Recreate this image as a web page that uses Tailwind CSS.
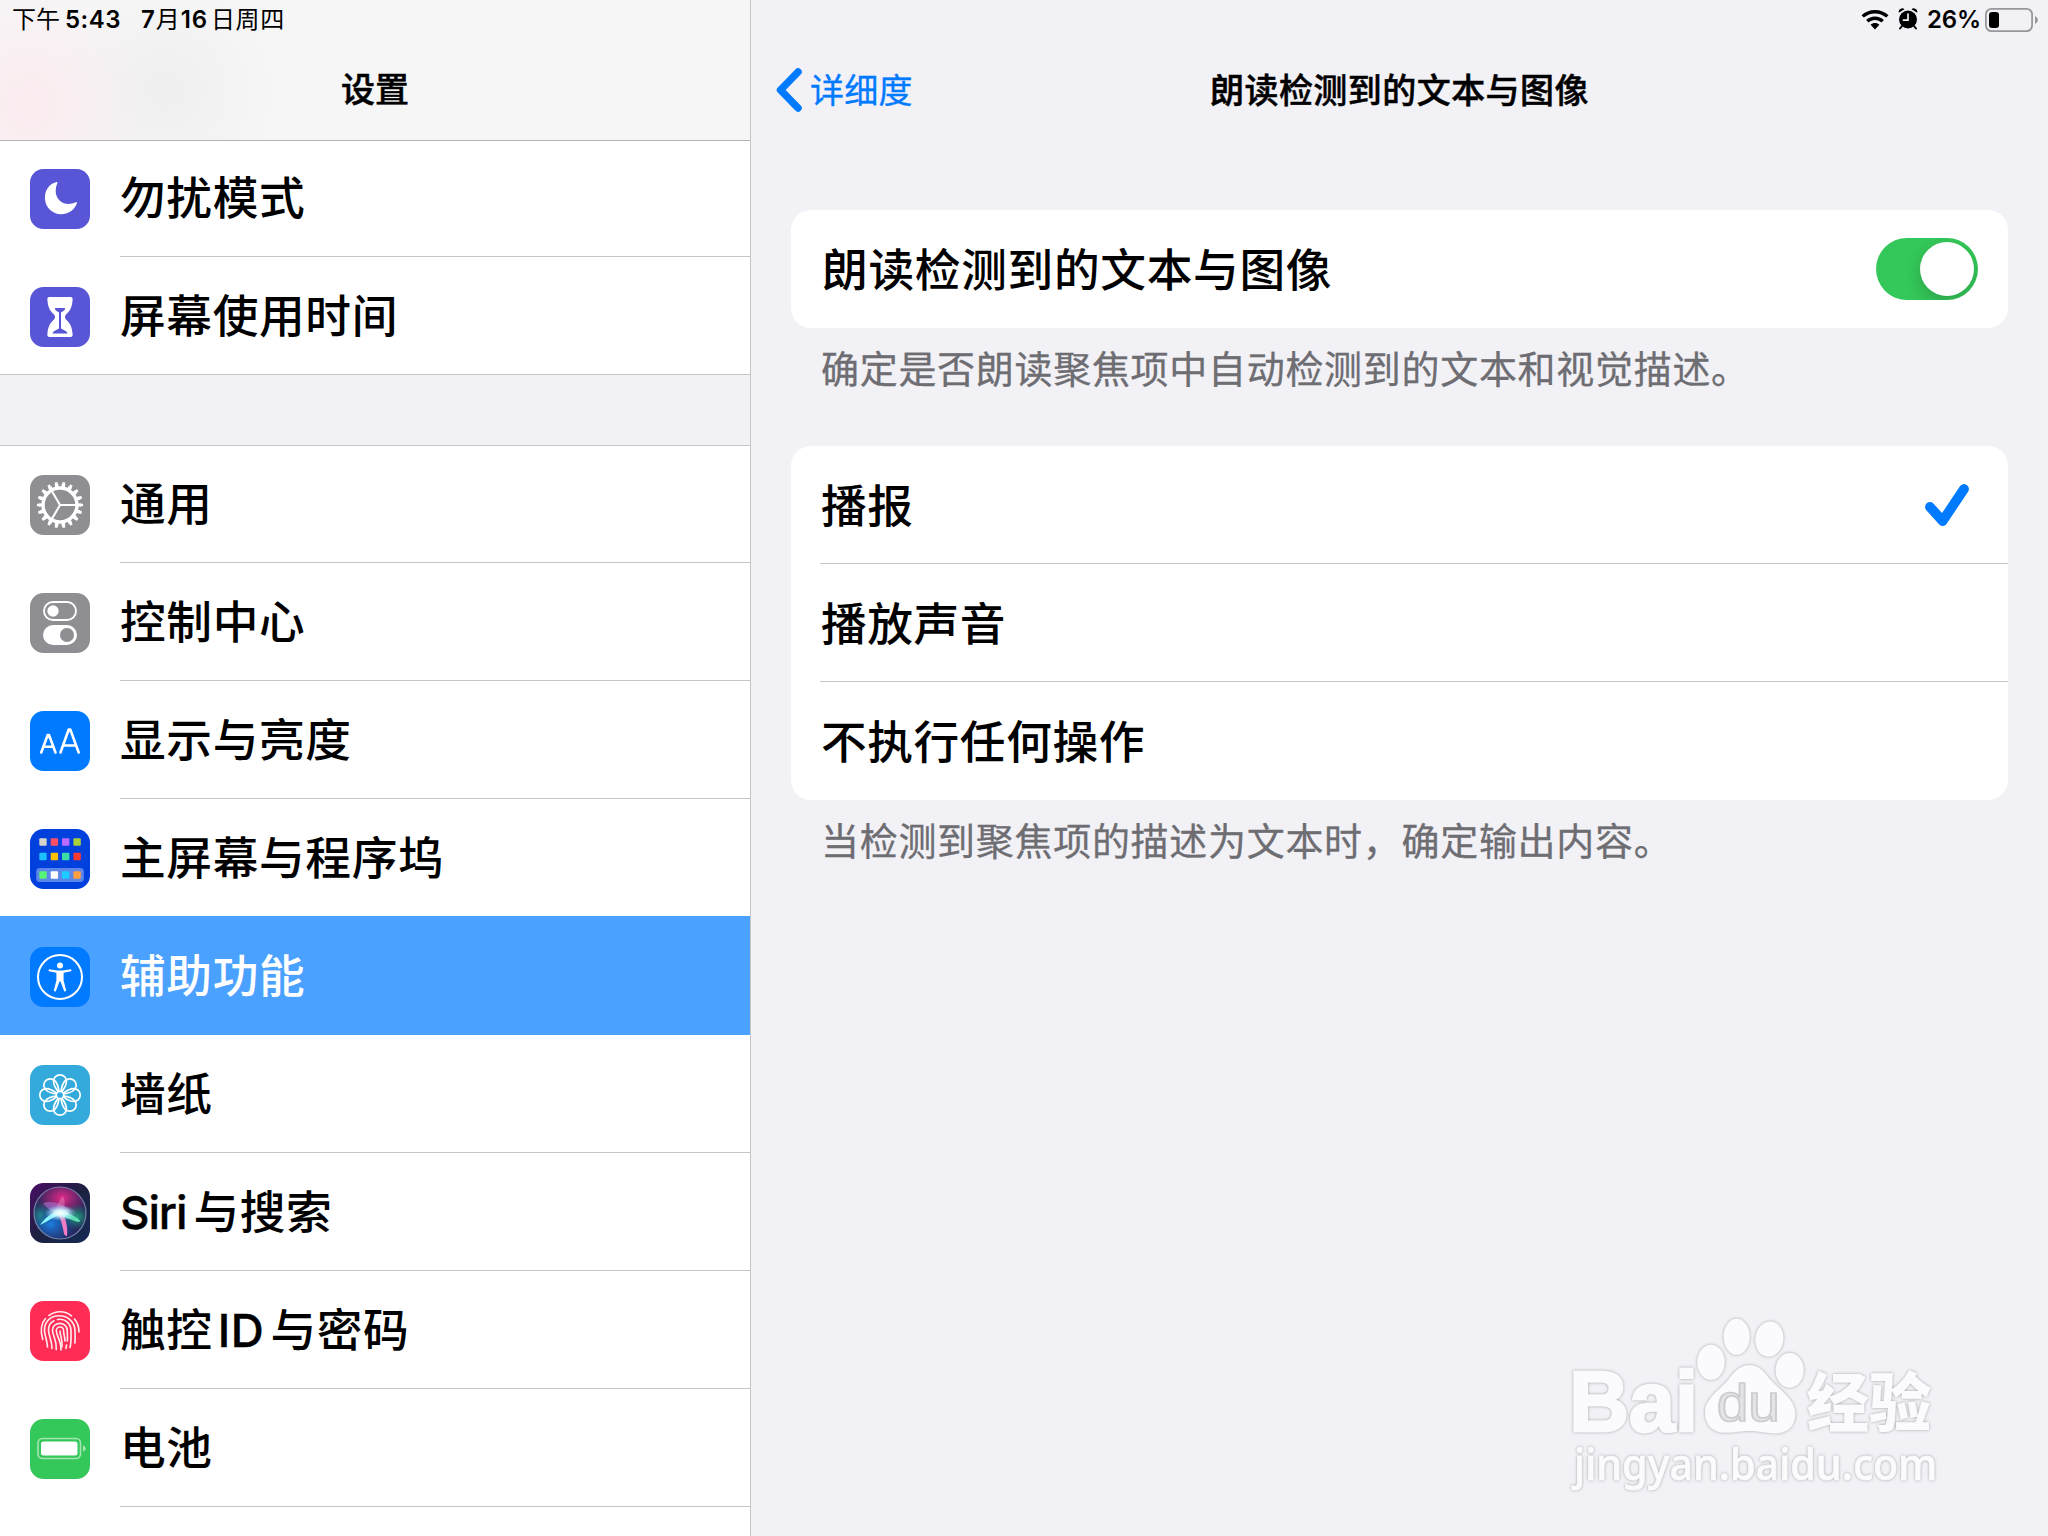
<!DOCTYPE html>
<html lang="zh-CN">
<head>
<meta charset="utf-8">
<title>设置</title>
<script src="https://cdn.jsdelivr.net/npm/@tailwindcss/browser@4"></script>
</head>
<body class="w-[2048px] h-[1536px] overflow-hidden flex bg-[#f2f1f6] text-black font-['Inter','Noto_Sans_CJK_SC',sans-serif]">

<aside class="w-[751px] h-[1536px] shrink-0 flex flex-col bg-white border-r border-[#c6c6c8] overflow-hidden">
  <header class="h-[141px] shrink-0 flex flex-col border-b border-[#b2b2b4] bg-[#f6f6f6] bg-[radial-gradient(ellipse_120px_130px_at_30px_105px,#fbebef_0%,#fbebef00_100%),radial-gradient(ellipse_110px_110px_at_165px_90px,#efefef_0%,#efefef00_100%)]">
    <div class="h-10 flex items-center pl-3 text-[24px] leading-10 whitespace-nowrap">
      <span>下午</span><span class="ml-[5px] font-semibold tracking-[0.5px]">5:43</span>
      <span class="ml-[20px] font-semibold">7</span><span class="ml-px">月</span><span class="ml-px font-semibold tracking-[0.8px]">16</span><span class="ml-[3px] tracking-[0.6px]">日周四</span>
    </div>
    <h1 class="h-[100px] flex justify-center pt-[25px] text-[34px] leading-[50px] font-medium [-webkit-text-stroke:0.5px]">设置</h1>
  </header>

  <nav class="flex flex-col text-[45.7px] leading-[60px] font-medium tracking-[0.65px] whitespace-nowrap">
    <a class="h-[116px] flex pl-[30px] gap-[30px]">
      <svg class="w-[60px] h-[60px] mt-7 shrink-0" viewBox="0 0 60 60"><rect width="60" height="60" rx="13.500" fill="#5856d6"/><path d="M26.600 13C18.600 15 14.600 22 14.900 29.500C15.300 38.500 22.500 45.200 31 45.200C38.500 45.200 44.500 41 46.900 34.300C47.200 33.400 46.600 33 45.800 33.300C43 34.500 41 34.900 38.500 34.900C31 34.900 25.700 29.300 25.700 22C25.700 19.500 26.200 17 27.300 14.200C27.600 13.300 27.300 12.900 26.600 13Z" fill="#fff"/></svg>
      <div class="grow border-b border-[#c6c6c8] pt-7">勿扰模式</div>
    </a>
    <a class="h-[118px] flex pl-[30px] gap-[30px] border-b border-[#c6c6c8]">
      <svg class="w-[60px] h-[60px] mt-[30px] shrink-0" viewBox="0 0 60 60"><rect width="60" height="60" rx="13.500" fill="#5856d6"/><path d="M19.500 10H40.500Q43 10 42.600 13C42 20 40.500 23.500 36 27.500Q34 30 36 32.500C40.500 36.500 42 40 42.600 47Q43 50 40.500 50H19.500Q17 50 17.400 47C18 40 19.500 36.500 24 32.500Q26 30 24 27.500C19.500 23.500 18 20 17.400 13Q17 10 19.500 10Z" fill="#fff"/><path d="M24.800 21H35.200L34.500 23.300L31 25.500V41.500L36.500 44.500L37.500 46.500H22.500L23.500 44.500L29 41.500V25.500L25.500 23.300Z" fill="#5856d6"/></svg>
      <div class="grow pt-[30px]">屏幕使用时间</div>
    </a>
    <div class="h-[70px] bg-[#f2f1f6]"></div>
    <a class="h-[118px] flex pl-[30px] gap-[30px] border-t border-[#c6c6c8]">
      <svg class="w-[60px] h-[60px] mt-[29px] shrink-0" viewBox="0 0 60 60" fill="none" stroke="#fff"><rect width="60" height="60" rx="13.500" fill="#8e8e93" stroke="none"/><circle cx="30" cy="30" r="17" stroke-width="3.400"/><circle cx="30" cy="30" r="19.500" stroke-width="3.400" pathLength="360" stroke-dasharray="10.500 9.500" stroke-dashoffset="5.250"/><circle cx="30" cy="30" r="21.700" stroke-width="2.800" pathLength="360" stroke-dasharray="7 13" stroke-dashoffset="3.500"/><path d="M46 30H30L22 16.200M30 30L22 43.800" stroke-width="2.100"/></svg>
      <div class="grow border-b border-[#c6c6c8] pt-[29px]">通用</div>
    </a>
    <a class="h-[118px] flex pl-[30px] gap-[30px]">
      <svg class="w-[60px] h-[60px] mt-[30px] shrink-0" viewBox="0 0 60 60"><rect width="60" height="60" rx="13.500" fill="#8e8e93"/><rect x="14" y="9" width="32" height="18" rx="9" fill="none" stroke="#fff" stroke-width="1.900"/><circle cx="23" cy="18" r="5.700" fill="#fff"/><rect x="13" y="32" width="34" height="20" rx="10" fill="#fff"/><circle cx="37" cy="42" r="7" fill="#8e8e93"/></svg>
      <div class="grow border-b border-[#c6c6c8] pt-[30px]">控制中心</div>
    </a>
    <a class="h-[118px] flex pl-[30px] gap-[30px]">
      <svg class="w-[60px] h-[60px] mt-[30px] shrink-0" viewBox="0 0 60 60" fill="none" stroke="#fff" stroke-width="2.600" stroke-linecap="round" stroke-linejoin="round"><rect width="60" height="60" rx="13.500" fill="#007aff" stroke="none"/><path d="M11.200 41.500L17.700 24H19L25.500 41.500M13.700 35.800H23M30.500 41.500L38.700 18.500H40.300L48.700 41.500M33.200 34.500H46"/></svg>
      <div class="grow border-b border-[#c6c6c8] pt-[30px]">显示与亮度</div>
    </a>
    <a class="h-[117px] flex pl-[30px] gap-[30px]">
      <svg class="w-[60px] h-[60px] mt-[30px] shrink-0" viewBox="0 0 60 60"><rect width="60" height="60" rx="13.500" fill="#0040dd"/><rect x="6.200" y="39" width="47.600" height="14" rx="3.500" fill="#5c86ea"/><g><rect x="9.300" y="9.300" width="7.400" height="7.400" rx="1" fill="#d6d3cb"/><rect x="20.700" y="9.300" width="7.400" height="7.400" rx="1" fill="#ff4f64"/><rect x="32" y="9.300" width="7.400" height="7.400" rx="1" fill="#bb6bff"/><rect x="43.400" y="9.300" width="7.400" height="7.400" rx="1" fill="#acd039"/><rect x="9.300" y="23.800" width="7.400" height="7.400" rx="1" fill="#19bfff"/><rect x="20.700" y="23.800" width="7.400" height="7.400" rx="1" fill="#ffc100"/><rect x="32" y="23.800" width="7.400" height="7.400" rx="1" fill="#3bdca5"/><rect x="43.400" y="23.800" width="7.400" height="7.400" rx="1" fill="#ff3a30"/><rect x="9.300" y="42.300" width="7.400" height="7.400" rx="1" fill="#56f577"/><rect x="20.700" y="42.300" width="7.400" height="7.400" rx="1" fill="#fff"/><rect x="32" y="42.300" width="7.400" height="7.400" rx="1" fill="#1accff"/><rect x="43.400" y="42.300" width="7.400" height="7.400" rx="1" fill="#ff9f40"/></g></svg>
      <div class="grow pt-[30px]">主屏幕与程序坞</div>
    </a>
    <a class="h-[119px] flex pl-[30px] gap-[30px] bg-[#4ba1ff] text-white">
      <svg class="w-[60px] h-[60px] mt-[31px] shrink-0" viewBox="0 0 60 60"><rect width="60" height="60" rx="13.500" fill="#007aff"/><circle cx="30" cy="30" r="22" fill="none" stroke="#fff" stroke-width="2"/><circle cx="30" cy="18.500" r="3" fill="#fff"/><path d="M19 22.200L27.500 23.600H32.500L41 22.200Q42 23.600 41 24.200L33.600 25.800V33.500L36.200 43.600Q35.200 45.200 34.200 44.200L30.500 34.500H29.500L25.800 44.200Q24.800 45.200 23.800 43.600L26.400 33.500V25.800L19 24.200Q18 23.600 19 22.200Z" fill="#fff"/></svg>
      <div class="grow pt-[31px]">辅助功能</div>
    </a>
    <a class="h-[118px] flex pl-[30px] gap-[30px]">
      <svg class="w-[60px] h-[60px] mt-[30px] shrink-0" viewBox="0 0 60 60"><rect width="60" height="60" rx="13.500" fill="#34aadc"/>
        <defs><path id="petal" d="M28.200 26.600C26.500 24.500 23.600 20.500 23.600 16.200A6.400 6.400 0 0 1 36.400 16.200C36.400 20.500 33.500 24.500 31.800 26.600"/></defs>
        <g fill="none" stroke="#fff" stroke-width="1.700"><use href="#petal"/><use href="#petal" transform="rotate(45 30 30)"/><use href="#petal" transform="rotate(90 30 30)"/><use href="#petal" transform="rotate(135 30 30)"/><use href="#petal" transform="rotate(180 30 30)"/><use href="#petal" transform="rotate(225 30 30)"/><use href="#petal" transform="rotate(270 30 30)"/><use href="#petal" transform="rotate(315 30 30)"/><circle cx="30" cy="30" r="3.700"/></g></svg>
      <div class="grow border-b border-[#c6c6c8] pt-[30px]">墙纸</div>
    </a>
    <a class="h-[118px] flex pl-[30px] gap-[30px]">
      <svg class="w-[60px] h-[60px] mt-[30px] shrink-0" viewBox="0 0 60 60">
        <defs>
          <linearGradient id="sb" x1="0" y1="0" x2="1" y2="1"><stop offset="0" stop-color="#4a0d66"/><stop offset=".5" stop-color="#1c2140"/><stop offset="1" stop-color="#152a55"/></linearGradient>
          <radialGradient id="s1" cx=".5" cy=".5" r=".5"><stop offset="0" stop-color="#e02a8a"/><stop offset="1" stop-color="#d0207c" stop-opacity="0"/></radialGradient>
          <radialGradient id="s2" cx=".5" cy=".5" r=".5"><stop offset="0" stop-color="#1a7ee0"/><stop offset="1" stop-color="#1560c0" stop-opacity="0"/></radialGradient>
          <radialGradient id="s3" cx=".5" cy=".5" r=".5"><stop offset="0" stop-color="#24c08a"/><stop offset="1" stop-color="#109070" stop-opacity="0"/></radialGradient>
          <radialGradient id="s4" cx=".5" cy=".5" r=".5"><stop offset="0" stop-color="#fff"/><stop offset=".4" stop-color="#d8faff" stop-opacity=".9"/><stop offset="1" stop-color="#7fe0ff" stop-opacity="0"/></radialGradient>
          <clipPath id="sc"><circle cx="30" cy="30" r="26"/></clipPath>
          <filter id="sf" x="-20%" y="-20%" width="140%" height="140%"><feGaussianBlur stdDeviation=".6"/></filter>
        </defs>
        <rect width="60" height="60" rx="13.500" fill="url(#sb)"/>
        <g clip-path="url(#sc)"><circle cx="30" cy="30" r="26" fill="#27265c"/><ellipse cx="32" cy="15" rx="26" ry="20" fill="url(#s1)"/><ellipse cx="21" cy="41" rx="26" ry="22" fill="url(#s2)"/><ellipse cx="10" cy="32" rx="12" ry="14" fill="url(#s3)" opacity=".5"/><ellipse cx="47" cy="34" rx="14" ry="13" fill="url(#s3)" opacity=".8"/>
          <g filter="url(#sf)"><path d="M13 20C22 17 34 21 41 28L30 31C24 30 17 26 13 20Z" fill="#c78bea" opacity=".45"/><path d="M33 13C36 19 35 25 31 30L26 28C27 22 29 17 33 13Z" fill="#f08fc8" opacity=".4"/><path d="M10 42C15 35 22 29 30 28L33 31C25 33 18 38 10 42Z" fill="#8ef6ff"/><path d="M28.500 31L33 30C36 37 38 45 37 53Q35 53 34 51C33 44 31 37 28.500 31Z" fill="#f07cc4"/><path d="M28 27C36 28.500 45 32.500 50 37.500Q50 39 48 39C41 37 34 34 28 31Z" fill="#5fdcb4"/><ellipse cx="30.500" cy="30" rx="16" ry="8" fill="url(#s4)"/></g></g>
        <circle cx="30" cy="30" r="26" fill="none" stroke="#8f9fc4" stroke-opacity=".75" stroke-width="1.200"/></svg>
      <div class="grow border-b border-[#c6c6c8] pt-[30px]"><span class="tracking-[-1.1px] [-webkit-text-stroke:0.4px]">Siri</span><span class="ml-[7px]">与搜索</span></div>
    </a>
    <a class="h-[118px] flex pl-[30px] gap-[30px]">
      <svg class="w-[60px] h-[60px] mt-[30px] shrink-0" viewBox="0 0 60 60"><rect width="60" height="60" rx="13.500" fill="#ff2d55"/><g fill="none" stroke="#fff" stroke-opacity=".9" stroke-width="1.650" stroke-linecap="round"><path d="M19 14.500C25.500 9.500 35 9.500 41.500 14.800M15.500 17.500C11 22.500 10 29 12.700 38.500M44.500 18C47.500 21.500 49 26 49 31"/><path d="M17.500 46C17 38 14.500 34 14.500 29C14.500 20 21 14.800 29 14.800C38 14.800 45 21 45 30C45 35 45.500 38 44.800 42"/><path d="M22 47.500C22 39 18.500 35 18.500 29C18.500 25 20.500 21.500 24 19.800M27.500 18.500C35 17 41 22.500 41 30C41 36 41.500 41 40 46.500"/><path d="M26.300 48.500C27 39 22.500 35 22.500 29C22.500 25 26 22.300 30 22.300C34.500 22.300 37.300 26 37.300 30C37.300 34 37.700 37 37.300 40M36.500 44L36 47.500"/><path d="M31 49C31.500 40 26.300 35 26.300 29.500C26.300 27.500 28 26 30 26C32.500 26 33.600 28 33.600 30C33.600 34 35 36 35 40"/><path d="M30 30C30 35 33 39 32 46"/></g></svg>
      <div class="grow border-b border-[#c6c6c8] pt-[30px]">触控<span class="ml-[5px] mr-1.5 [-webkit-text-stroke:0.4px]">ID</span>与密码</div>
    </a>
    <a class="h-[118px] flex pl-[30px] gap-[30px]">
      <svg class="w-[60px] h-[60px] mt-[30px] shrink-0" viewBox="0 0 60 60"><rect width="60" height="60" rx="13.500" fill="#34c759"/><rect x="8" y="19.500" width="42.500" height="20" rx="4.500" fill="none" stroke="#a3e5b3" stroke-width="1.600"/><rect x="11" y="22.500" width="36.500" height="14" rx="2.500" fill="#fff"/><path d="M53 26.300Q55.800 27.500 55.800 29.500T53 32.700Z" fill="#a3e5b3"/></svg>
      <div class="grow border-b border-[#c6c6c8] pt-[30px]">电池</div>
    </a>
  </nav>
</aside>

<main class="relative w-[1297px] h-[1536px] flex flex-col">
  <div class="h-10 shrink-0 flex items-start justify-end pr-[9px]">
    <svg class="w-7 h-5 mt-2.5" viewBox="0 0 28 20"><path d="M14 0C19.500 0 24 2 27.500 5.200L25.200 7.600C22 4.900 18.300 3.400 14 3.400S6 4.900 2.800 7.600L.5 5.200C4 2 8.500 0 14 0ZM14 6.600C17.500 6.600 20.500 7.900 22.900 10L20.500 12.400C18.700 10.800 16.500 9.900 14 9.900S9.300 10.800 7.500 12.400L5.100 10C7.500 7.900 10.500 6.600 14 6.600ZM14 13.100C15.700 13.100 17.200 13.700 18.400 14.800L14 19.400L9.600 14.800C10.800 13.700 12.300 13.100 14 13.100Z"/></svg>
    <svg class="w-5 h-[22px] mt-2 ml-[9px]" viewBox="0 0 20 22"><circle cx="10" cy="11.500" r="9"/><path d="M.8 4.700Q.3 2 2.300 1Q4.600 -.4 6.500 1.200ZM19.200 4.700Q19.700 2 17.700 1Q15.400 -.4 13.500 1.200Z"/><path d="M4 18L2 20.500M16 18L18 20.500" stroke="#000" stroke-width="2" stroke-linecap="round"/><path d="M10 6V12.200H5.500" fill="none" stroke="#f2f1f6" stroke-width="1.700" stroke-linecap="round"/></svg>
    <span class="ml-[9px] w-[56px] text-[24px] leading-10 font-semibold tracking-[-0.2px]">26%</span>
    <svg class="w-[54px] h-6 mt-2 ml-[2px]" viewBox="0 0 54 24"><rect x=".9" y=".9" width="46.200" height="22.200" rx="5.500" fill="none" stroke="#98979b" stroke-width="1.800"/><rect x="4" y="4" width="10" height="16" rx="3"/><path d="M50 8Q53 9.500 53 12T50 16Z" fill="#98979b"/></svg>
  </div>
  <div class="h-[170px] shrink-0 grid grid-cols-[1fr_auto_1fr] pt-[25px] items-start leading-[52px] text-[34px]">
    <a class="flex pl-[25px] text-[#007aff]">
      <svg class="w-[26px] h-11 mt-[3px]" viewBox="0 0 26 44" fill="none" stroke="#007aff" stroke-width="7.500" stroke-linecap="round" stroke-linejoin="round"><path d="M22 4L4.500 22L22 40"/></svg>
      <span class="ml-2 tracking-[0.3px] [-webkit-text-stroke:0.3px]">详细度</span>
    </a>
    <h2 class="font-medium tracking-[0.45px] [-webkit-text-stroke:0.5px]">朗读检测到的文本与图像</h2>
    <span></span>
  </div>

  <section class="mx-10 h-[118px] shrink-0 rounded-[20px] bg-white flex items-center justify-between pl-[31px] pr-[30px]">
    <span class="pt-1 text-[45.7px] leading-[60px] font-medium tracking-[0.7px]">朗读检测到的文本与图像</span>
    <span class="w-[102px] h-[62px] rounded-full bg-[#34c759] p-1 flex justify-end overflow-hidden"><span class="size-[54px] rounded-full bg-white shadow-[0_6px_16px_rgba(0,0,0,0.18)]"></span></span>
  </section>
  <p class="h-[118px] shrink-0 pt-4 pl-[70px] text-[38px] leading-[50px] tracking-[0.7px] text-[#6d6d72] [-webkit-text-stroke:0.3px]">确定是否朗读聚焦项中自动检测到的文本和视觉描述。</p>

  <section class="mx-10 shrink-0 rounded-[20px] bg-white pl-[29px] text-[45.7px] leading-[121px] font-medium tracking-[0.6px]">
    <div class="h-[118px] flex justify-between border-b border-[#c6c6c8] pl-px"><span>播报</span>
      <svg class="w-11 h-[42px] mt-[38px] mr-[39px]" viewBox="0 0 44 42" fill="none" stroke="#007aff" stroke-width="9.800" stroke-linecap="round" stroke-linejoin="round"><path d="M5 23L17.600 37L39 5"/></svg>
    </div>
    <div class="h-[118px] border-b border-[#c6c6c8] pl-px">播放声音</div>
    <div class="h-[118px] pl-px">不执行任何操作</div>
  </section>
  <p class="pt-4 pl-[70px] text-[38px] leading-[50px] tracking-[0.7px] text-[#6d6d72] [-webkit-text-stroke:0.3px]">当检测到聚焦项的描述为文本时，确定输出内容。</p>

  <svg class="absolute left-[789px] top-[1300px] w-[430px] h-[210px]" viewBox="0 0 1290 630">
    <defs><filter id="halo" x="-5%" y="-5%" width="110%" height="110%"><feDropShadow dx="0" dy="0" stdDeviation="4" flood-color="#808086" flood-opacity=".75"/></filter></defs>
    <g fill="#fbfbfd" filter="url(#halo)">
      <ellipse cx="513" cy="187" rx="41" ry="53"/><ellipse cx="590" cy="110" rx="39" ry="54"/><ellipse cx="688" cy="117" rx="42" ry="53" transform="rotate(8 688 117)"/><ellipse cx="749" cy="211" rx="42" ry="52"/>
      <path d="M628 196C658 196 672 215 690 238C715 268 766 296 766 342C766 378 742 400 708 400C678 400 660 393 630 393C600 393 585 398 553 398C520 398 495 375 495 338C495 295 540 270 566 238C585 214 600 196 628 196Z"/>
      <text x="88" y="392" font-family="Liberation Sans" font-weight="700" font-size="256" textLength="386" lengthAdjust="spacingAndGlyphs" stroke="#fbfbfd" stroke-width="8">Bai</text>
      <text x="800" y="377" font-family="Noto Sans CJK SC" font-weight="900" font-size="192" textLength="374" lengthAdjust="spacingAndGlyphs">经验</text>
      <text x="102" y="539" font-family="Noto Sans" font-weight="500" font-size="128" textLength="1090" lengthAdjust="spacingAndGlyphs" stroke="#fbfbfd" stroke-width="2">jingyan.baidu.com</text>
    </g>
    <text x="530" y="364" font-family="Liberation Sans" font-size="153" textLength="190" lengthAdjust="spacingAndGlyphs" fill="#e4e4e8" stroke="#cbcbd0" stroke-width="5">du</text>
  </svg>
</main>
</body>
</html>
